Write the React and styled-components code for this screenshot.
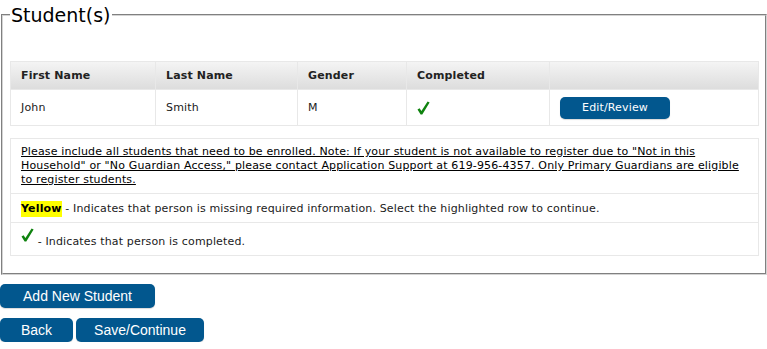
import React from "react";
import styled, { createGlobalStyle } from "styled-components";

const GlobalStyle = createGlobalStyle`
  body {
    margin: 0;
    background: #fff;
    font-family: "DejaVu Sans", Verdana, sans-serif;
    font-size: 11px;
    letter-spacing: 0.15px;
    color: #1a1a1a;
  }
`;

const students = [
  { first: "John", last: "Smith", gender: "M", completed: true },
];

const Fieldset = styled.fieldset`
  margin: 3px 0 0 1px;
  padding: 0 6px 17px 7px;
  border: 2px groove #d4d4d4;
  min-width: 0;
`;

const Legend = styled.legend`
  padding: 0 1px;
  font-size: 19px;
  line-height: 24px;
  letter-spacing: 0;
  color: #000;
`;

const Grid = styled.table`
  width: 100%;
  table-layout: fixed;
  border-collapse: collapse;
  margin-top: ${(p) => p.top || 0}px;
  th,
  td {
    border: 1px solid #e8e8e8;
    text-align: left;
    padding: 0 10px;
  }
`;

const HeadRow = styled.tr`
  height: 28px;
  background: linear-gradient(#f4f4f4, #dcdcdc);
  th {
    font-weight: bold;
    color: #222;
  }
`;

const BodyRow = styled.tr`
  height: 36px;
`;

const NoteRow = styled.tr`
  height: ${(p) => p.h}px;
`;

const NoteCell = styled.td`
  padding: 0 10px !important;
  line-height: ${(p) => p.lh || 14}px;
`;

const Underlined = styled.span`
  text-decoration: underline;
  color: #000;
`;

const Highlight = styled.b`
  background: #ffff00;
  color: #000;
  padding: 1px 0 2px;
`;

const SmallButton = styled.button`
  width: 110px;
  height: 22px;
  border: none;
  border-radius: 5px;
  background: #02578e;
  color: #fff;
  font-family: "DejaVu Sans", Verdana, sans-serif;
  font-size: 11px;
  letter-spacing: 0.15px;
  box-shadow: 0 1px 1px rgba(0, 0, 0, 0.15);
  cursor: pointer;
`;

const Actions = styled.div`
  display: flex;
  gap: 3px;
  margin-top: ${(p) => p.top || 10}px;
`;

const ActionButton = styled.button`
  width: ${(p) => p.w}px;
  height: 24px;
  padding: 0;
  border: none;
  border-radius: 5px;
  background: #02578e;
  color: #fff;
  font-family: "Liberation Sans", Arial, sans-serif;
  font-size: 14px;
  box-shadow: 0 1px 1px rgba(0, 0, 0, 0.15);
  cursor: pointer;
`;

const CheckIcon = styled.svg`
  width: 13px;
  height: 14px;
  vertical-align: ${(p) => p.shift || 0}px;
`;

const Check = ({ shift }) => (
  <CheckIcon viewBox="0 0 13 14" shift={shift}>
    <polygon
      points="0.5,8.5 2.6,7.3 4.4,10 10.6,0.6 12.6,1.6 5.3,13.4 3.6,13.4"
      fill="#0f830f"
    />
  </CheckIcon>
);

export default function App() {
  return (
    <>
      <GlobalStyle />
      <Fieldset>
        <Legend>Student(s)</Legend>
        <Grid top={34}>
          <colgroup>
            <col style={{ width: 145 }} />
            <col style={{ width: 142 }} />
            <col style={{ width: 109 }} />
            <col style={{ width: 143 }} />
            <col />
          </colgroup>
          <thead>
            <HeadRow>
              <th>First Name</th>
              <th>Last Name</th>
              <th>Gender</th>
              <th>Completed</th>
              <th></th>
            </HeadRow>
          </thead>
          <tbody>
            {students.map((s) => (
              <BodyRow key={s.first + s.last}>
                <td>{s.first}</td>
                <td>{s.last}</td>
                <td>{s.gender}</td>
                <td>{s.completed && <Check shift={-3} />}</td>
                <td>
                  <SmallButton>Edit/Review</SmallButton>
                </td>
              </BodyRow>
            ))}
          </tbody>
        </Grid>
        <Grid top={12}>
          <tbody>
            <NoteRow h={55}>
              <NoteCell>
                <Underlined>
                  Please include all students that need to be enrolled. Note: If
                  your student is not available to register due to "Not in this
                  Household" or "No Guardian Access," please contact Application
                  Support at 619-956-4357. Only Primary Guardians are eligible to
                  register students.
                </Underlined>
              </NoteCell>
            </NoteRow>
            <NoteRow h={29}>
              <NoteCell lh={15}>
                <Highlight>Yellow</Highlight> - Indicates that person is missing
                required information. Select the highlighted row to continue.
              </NoteCell>
            </NoteRow>
            <NoteRow h={33}>
              <NoteCell lh={16}>
                <Check shift={3} /> - Indicates that person is completed.
              </NoteCell>
            </NoteRow>
          </tbody>
        </Grid>
      </Fieldset>
      <Actions top={9}>
        <ActionButton w={155}>Add New Student</ActionButton>
      </Actions>
      <Actions>
        <ActionButton w={73}>Back</ActionButton>
        <ActionButton w={128}>Save/Continue</ActionButton>
      </Actions>
    </>
  );
}
